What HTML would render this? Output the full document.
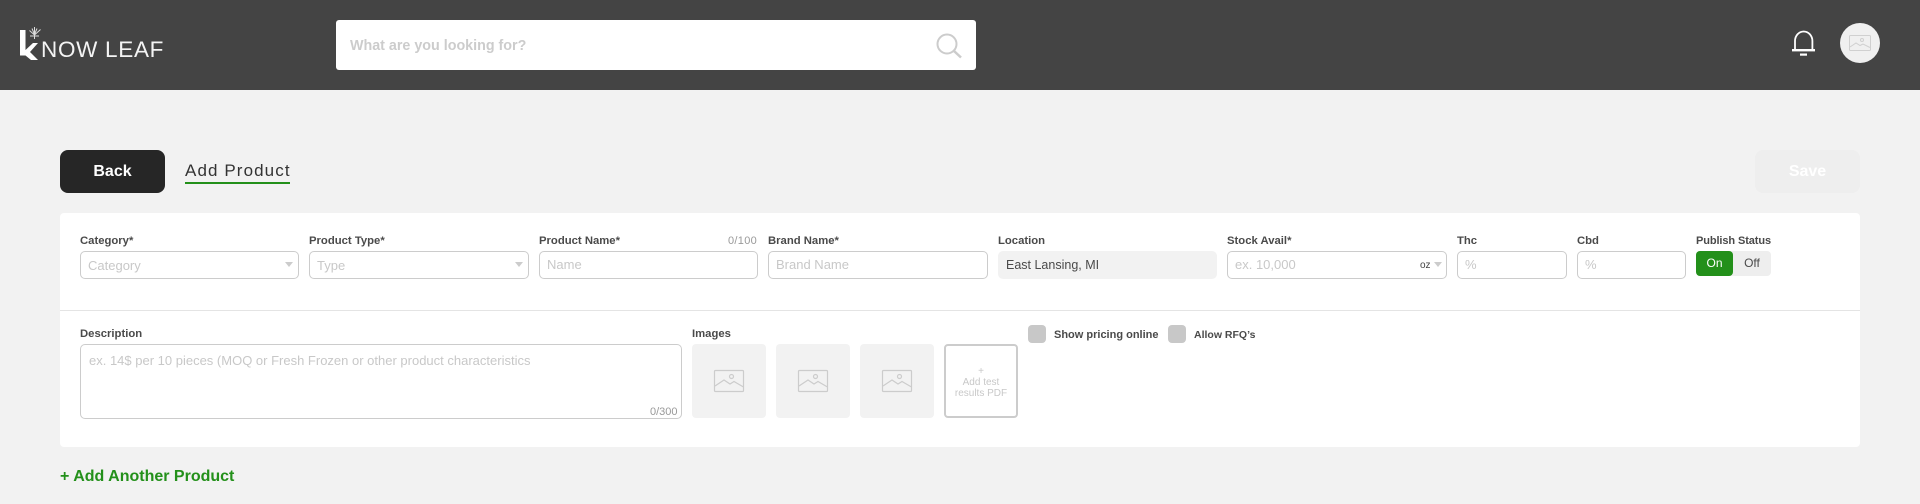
<!DOCTYPE html>
<html><head><meta charset="utf-8"><style>
html,body{margin:0;padding:0;width:1920px;height:504px;overflow:hidden;background:#f2f2f2;font-family:"Liberation Sans",sans-serif}
.a,.l,.i,.t{position:absolute;box-sizing:border-box;white-space:nowrap}
.l{font-size:11.3px;font-weight:700;color:#4a4a4a;line-height:14px;top:234px}
.i{top:251px;height:28px;border:1px solid #ccc;border-radius:5px;background:#fff}
.t{font-size:13px;color:#c8c8c8;line-height:16px;top:257px}
.ar{position:absolute;width:0;height:0;border-left:4px solid transparent;border-right:4px solid transparent;border-top:5px solid #ccc;top:262px}
.ph{position:absolute;top:344px;width:74px;height:74px;background:#f2f2f2;border-radius:4px}
svg{position:absolute;overflow:visible}
</style></head><body>
<div class="a" style="left:0;top:0;width:1920px;height:90px;background:#444"></div>
<svg style="left:0;top:0" width="180" height="90">
<path d="M20 30h5.500v20l7.500-7h5l-8 9 8 8h-7l-5.500-4.500h-5.500z" fill="#fff"/>
<g stroke="#dcdcdc" stroke-width="1" fill="none"><path d="M34.500 27v12M29.500 30.500l5 4.500 6-5.500M30 36h9M32 28.500l2.500 6 2.500-6"/></g>
</svg>
<div class="a" style="left:41px;top:37px;font-size:22.500px;line-height:26px;color:#f4f4f4;letter-spacing:.7px;font-weight:400">NOW LEAF</div>
<div class="a" style="left:336px;top:20px;width:640px;height:50px;background:#fff;border-radius:3px"></div>
<div class="a" style="left:350px;top:37px;font-size:14.300px;line-height:18px;font-weight:700;color:#ccc">What are you looking for?</div>
<svg style="left:0;top:0" width="1920" height="90">
<circle cx="947" cy="44" r="9.500" fill="none" stroke="#ccc" stroke-width="2"/><path d="M954 51l7 6.500" stroke="#ccc" stroke-width="2.500" fill="none"/>
<path d="M1795 50V41a8.700 9.500 0 0 1 17.400 0V50" fill="none" stroke="#fff" stroke-width="1.800"/>
<rect x="1792" y="49" width="23" height="2.400" fill="#fff"/><rect x="1800" y="53.500" width="7" height="2.200" fill="#fff"/>
<circle cx="1860" cy="43" r="20" fill="#f0f0f0"/>
<g fill="none" stroke="#d0d0d0" stroke-width="1"><rect x="1849.500" y="35.500" width="21" height="15" rx="1"/><circle cx="1862" cy="40" r="1.500"/><path d="M1850 47l6-4 4 2.500 3-1.500 7 3.500"/></g>
</svg>
<div class="a" style="left:60px;top:150px;width:105px;height:43px;background:#262626;border-radius:8px;color:#fff;font-weight:700;font-size:16px;line-height:43px;text-align:center">Back</div>
<div class="a" style="left:185px;top:162px;font-size:17px;line-height:18px;color:#333;letter-spacing:1.100px">Add Product</div>
<div class="a" style="left:185px;top:182px;width:105px;height:2px;background:#23901a"></div>
<div class="a" style="left:1755px;top:150px;width:105px;height:43px;background:#eee;border-radius:8px;color:#fff;font-weight:700;font-size:16px;line-height:43px;text-align:center">Save</div>
<div class="a" style="left:60px;top:213px;width:1800px;height:234px;background:#fff;border-radius:4px"></div>
<div class="a" style="left:60px;top:310px;width:1800px;height:1px;background:#e4e4e4"></div>

<div class="l" style="left:80px">Category*</div>
<div class="i" style="left:80px;width:219px"></div><div class="t" style="left:88px;top:258px">Category</div><div class="ar" style="left:285px"></div>
<div class="l" style="left:309px">Product Type*</div>
<div class="i" style="left:309px;width:220px"></div><div class="t" style="left:317px;top:258px">Type</div><div class="ar" style="left:515px"></div>
<div class="l" style="left:539px">Product Name*</div>
<div class="a" style="left:728px;top:234px;font-size:11px;line-height:14px;color:#999;letter-spacing:.3px">0/100</div>
<div class="i" style="left:539px;width:219px"></div><div class="t" style="left:547px">Name</div>
<div class="l" style="left:768px">Brand Name*</div>
<div class="i" style="left:768px;width:220px"></div><div class="t" style="left:776px">Brand Name</div>
<div class="l" style="left:998px">Location</div>
<div class="a" style="left:998px;top:251px;width:219px;height:28px;background:#f2f2f2;border-radius:5px"></div><div class="t" style="left:1006px;color:#4a4a4a;font-size:12.500px">East Lansing, MI</div>
<div class="l" style="left:1227px">Stock Avail*</div>
<div class="i" style="left:1227px;width:220px"></div><div class="t" style="left:1235px">ex. 10,000</div>
<div class="a" style="left:1420px;top:258px;font-size:10px;line-height:16px;color:#444">oz</div><div class="ar" style="left:1434px"></div>
<div class="l" style="left:1457px">Thc</div>
<div class="i" style="left:1457px;width:110px"></div><div class="t" style="left:1465px">%</div>
<div class="l" style="left:1577px">Cbd</div>
<div class="i" style="left:1577px;width:109px"></div><div class="t" style="left:1585px">%</div>
<div class="l" style="left:1696px;font-size:11px;letter-spacing:-.1px">Publish Status</div>
<div class="a" style="left:1696px;top:251px;width:75px;height:25px;background:#eee;border-radius:4px"></div>
<div class="a" style="left:1696px;top:251px;width:37px;height:25px;background:#23901a;border-radius:4px;color:#fff;font-size:12px;line-height:25px;text-align:center">On</div>
<div class="a" style="left:1733px;top:251px;width:38px;height:25px;color:#4a4a4a;font-size:12px;line-height:25px;text-align:center">Off</div>

<div class="l" style="left:80px;top:327px">Description</div>
<div class="i" style="left:80px;top:344px;width:602px;height:75px"></div>
<div class="t" style="left:89px;top:353px">ex. 14$ per 10 pieces (MOQ or Fresh Frozen or other product characteristics</div>
<div class="a" style="left:650px;top:405px;font-size:11px;line-height:14px;color:#999">0/300</div>
<div class="l" style="left:692px;top:327px">Images</div>
<div class="ph" style="left:692px"></div><div class="ph" style="left:776px"></div><div class="ph" style="left:860px"></div>
<svg style="left:0;top:0" width="1920" height="504"><g fill="none" stroke="#ccc" stroke-width="1.200">
<rect x="714.500" y="370.500" width="29" height="21" rx="1"/><circle cx="731.500" cy="376.500" r="2"/><path d="M715 386l9-6 6 4 4-2.500 9.500 5.500"/>
<rect x="798.500" y="370.500" width="29" height="21" rx="1"/><circle cx="815.500" cy="376.500" r="2"/><path d="M799 386l9-6 6 4 4-2.500 9.500 5.500"/>
<rect x="882.500" y="370.500" width="29" height="21" rx="1"/><circle cx="899.500" cy="376.500" r="2"/><path d="M883 386l9-6 6 4 4-2.500 9.500 5.500"/>
</g></svg>
<div class="a" style="left:944px;top:344px;width:74px;height:74px;border:2px solid #ccc;border-radius:4px;background:#fff;color:#c8c8c8;font-size:10px;line-height:11px;text-align:center;padding-top:20px">+<br>Add test<br>results PDF</div>
<div class="a" style="left:1028px;top:325px;width:18px;height:18px;background:#c8c8c8;border-radius:4px"></div>
<div class="l" style="left:1054px;top:328px;font-size:11px">Show pricing online</div>
<div class="a" style="left:1168px;top:325px;width:18px;height:18px;background:#c8c8c8;border-radius:4px"></div>
<div class="l" style="left:1194px;top:328px;font-size:10.500px">Allow RFQ’s</div>
<div class="a" style="left:60px;top:468px;font-size:16px;line-height:18px;font-weight:700;color:#23901a">+ Add Another Product</div>
</body></html>
